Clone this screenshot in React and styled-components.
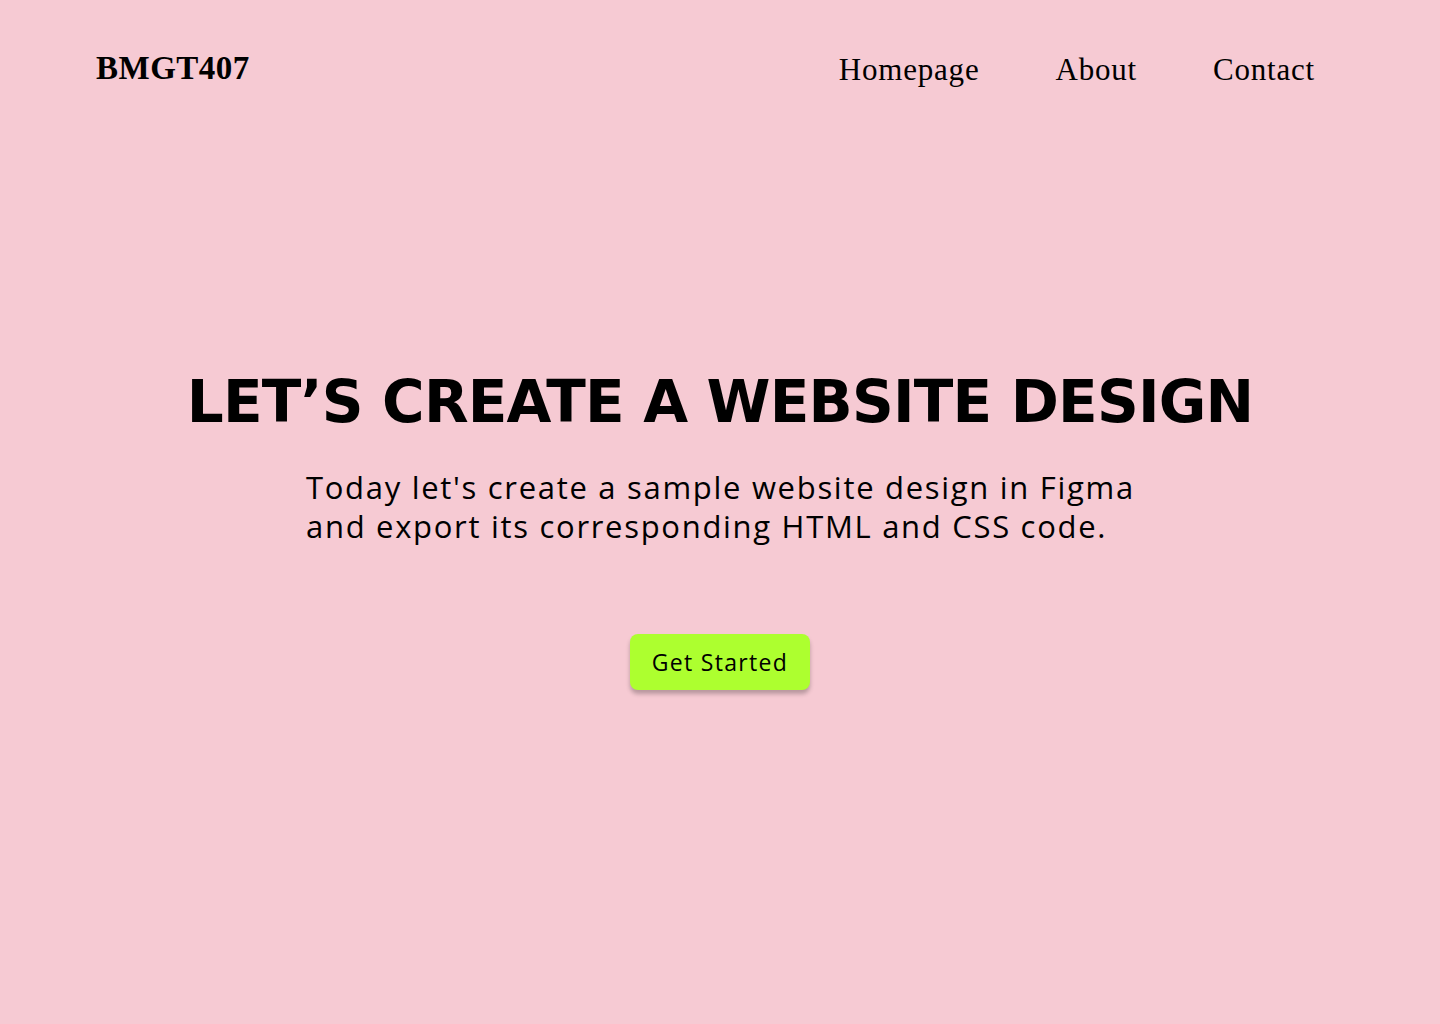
import React from 'react'
import styled, { createGlobalStyle } from 'styled-components'

const GlobalStyle = createGlobalStyle`
  html, body {
    margin: 0;
    padding: 0;
    background: #f6cad3;
  }
  * {
    box-sizing: border-box;
  }
`

const Page = styled.div`
  width: 1440px;
  height: 1024px;
  background: #f6cad3;
  color: #000;
  display: flex;
  flex-direction: column;
`

const Header = styled.header`
  display: flex;
  justify-content: space-between;
  align-items: flex-start;
  height: 140px;
  padding: 46px 125px 0 96px;
`

const Logo = styled.div`
  font-family: 'Liberation Serif', 'DejaVu Serif', serif;
  font-weight: 700;
  font-size: 33px;
  line-height: 44px;
  letter-spacing: 0.5px;
`

const Nav = styled.ul`
  display: flex;
  gap: 76px;
  list-style: none;
  margin: 0;
  padding: 0;
`

const NavItem = styled.li`
  font-family: 'Liberation Serif', 'DejaVu Serif', serif;
  font-size: 31px;
  line-height: 48px;
  letter-spacing: 0.8px;
  cursor: pointer;
`

const Hero = styled.main`
  display: flex;
  flex-direction: column;
  align-items: center;
  padding-top: 226px;
`

const Title = styled.h1`
  margin: 0;
  font-family: 'DejaVu Sans', 'Liberation Sans', sans-serif;
  font-weight: 700;
  font-size: 58px;
  line-height: 72px;
  letter-spacing: -0.8px;
`

const Lead = styled.p`
  width: 828px;
  margin: 30px 0 0;
  font-family: 'Open Sans', 'Liberation Sans', sans-serif;
  font-size: 31px;
  line-height: 39px;
  letter-spacing: 1.7px;
  text-align: left;
  white-space: nowrap;
`

const Button = styled.button`
  margin-top: 88px;
  width: 180px;
  height: 56px;
  border: none;
  border-radius: 8px;
  background: #adff2f;
  box-shadow: 0 4px 4px rgba(0, 0, 0, 0.25);
  font-family: 'Open Sans', 'Liberation Sans', sans-serif;
  font-size: 23px;
  letter-spacing: 1.3px;
  color: #000;
  cursor: pointer;
`

const navLinks = ['Homepage', 'About', 'Contact']

export default function App() {
  return (
    <Page>
      <GlobalStyle />
      <Header>
        <Logo>BMGT407</Logo>
        <Nav>
          {navLinks.map((l) => (
            <NavItem key={l}>{l}</NavItem>
          ))}
        </Nav>
      </Header>
      <Hero>
        <Title>LET’S CREATE A WEBSITE DESIGN</Title>
        <Lead>
          Today let's create a sample website design in Figma
          <br />
          and export its corresponding HTML and CSS code.
        </Lead>
        <Button>Get Started</Button>
      </Hero>
    </Page>
  )
}
